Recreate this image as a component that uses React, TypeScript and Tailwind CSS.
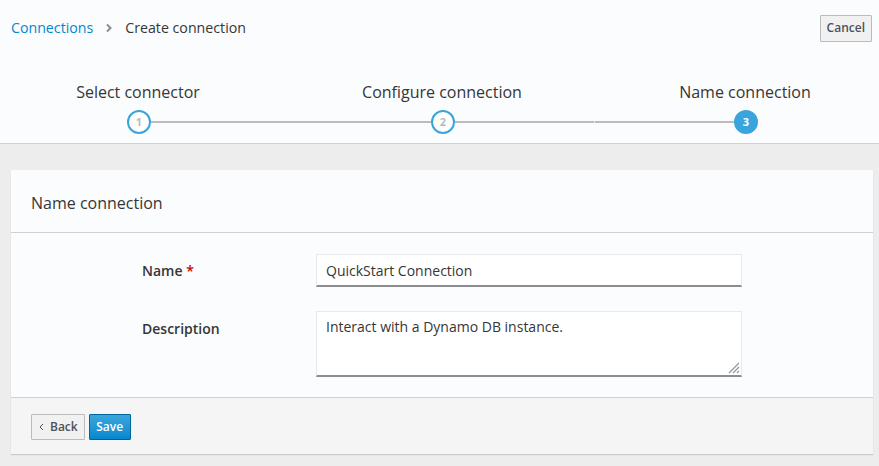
import React from "react";

const font = { fontFamily: '"Open Sans", "Noto Sans", sans-serif' };

function StepCircle({ n, active }: { n: number; active?: boolean }) {
  return (
    <div
      className={`flex h-[24px] w-[24px] shrink-0 items-center justify-center rounded-full border-2 border-[#39a5dc] text-[11px] font-bold ${
        active ? "bg-[#39a5dc] text-white" : "bg-white text-[#bbbbbb]"
      }`}
    >
      {n}
    </div>
  );
}

export default function App() {
  return (
    <div className="flex h-[466px] w-[879px] flex-col bg-[#ededed] text-[#363636]" style={font}>
      {/* Header */}
      <div className="h-[144px] shrink-0 border-b border-[#d1d1d1] bg-[#fbfcfd]">
        <div className="flex h-[56px] items-center justify-between pl-[11px] pr-[7px]">
          <div className="flex items-center text-[14.2px]">
            <span className="text-[#0088ce]">Connections</span>
            <svg className="mx-[12px]" width="8" height="10" viewBox="0 0 8 10">
              <path d="M2 1.5 L5.5 5 L2 8.5" fill="none" stroke="#8b8d8f" strokeWidth="2" />
            </svg>
            <span>Create connection</span>
          </div>
          <button className="h-[27px] rounded-[1px] border border-[#bbbbbb] bg-[#f1f1f1] px-[6px] text-[12px] font-semibold text-[#4d5258]">
            Cancel
          </button>
        </div>

        {/* Stepper labels */}
        <div className="flex pt-[24px] text-[16px] leading-[24px]">
          <div className="ml-[18px] w-[240px] text-center">Select connector</div>
          <div className="ml-[64px] w-[240px] text-center">Configure connection</div>
          <div className="ml-[63px] w-[240px] text-center">Name connection</div>
        </div>

        {/* Stepper track */}
        <div className="mt-[6px] flex items-center">
          <div className="w-[127px] shrink-0" />
          <StepCircle n={1} />
          <div className="h-[2px] w-[280px] bg-[#bbbbbb]" />
          <StepCircle n={2} />
          <div className="h-[2px] w-[139px] bg-[#bbbbbb]" />
          <div className="h-[2px] w-[1px] bg-[#e5e5e5]" />
          <div className="h-[2px] w-[139px] bg-[#bbbbbb]" />
          <StepCircle n={3} active />
        </div>
      </div>

      {/* Main */}
      <div className="flex-1 pl-[11px] pr-[6px] pt-[26px]">
        <div className="flex h-[284px] flex-col bg-white shadow-[0_1px_1px_rgba(3,3,3,0.15)]">
          <div className="flex h-[63px] shrink-0 items-center border-b border-[#d1d1d1] bg-[#fbfcfd] pl-[20px] pt-[3px] text-[16px]">
            Name connection
          </div>
          <div className="flex-1 bg-[#fbfcfd] pt-[21px] text-[14px]">
            <div className="flex items-center">
              <div className="w-[305px] shrink-0 pl-[131px] font-semibold">
                Name <span className="text-[#cc0000]">*</span>
              </div>
              <div className="flex h-[33px] w-[426px] items-center border border-[#e9e9e9] border-b-2 border-b-[#8b8d8f] bg-white px-[9px]">
                QuickStart Connection
              </div>
            </div>
            <div className="mt-[24px] flex items-start">
              <div className="w-[305px] shrink-0 pl-[131px] pt-[7px] font-semibold">Description</div>
              <div className="relative h-[66px] w-[426px] border border-[#e9e9e9] border-b-2 border-b-[#8b8d8f] bg-white px-[9px] pt-[4px]">
                Interact with a Dynamo DB instance.
                <svg className="absolute bottom-[1px] right-[1px]" width="13" height="13" viewBox="0 0 13 13">
                  <path d="M12 2 L2 12 M12 6 L6 12 M12 10 L10 12" stroke="#999" strokeWidth="1.3" />
                </svg>
              </div>
            </div>
          </div>
          <div className="flex h-[57px] shrink-0 items-center gap-[4px] border-t border-[#d1d1d1] bg-[#f5f5f5] pl-[20px] pt-[2px]">
            <button className="flex h-[26px] items-center gap-[6px] rounded-[1px] border border-[#bbbbbb] bg-[#f1f1f1] pl-[7px] pr-[6px] text-[12px] font-semibold text-[#4d5258]">
              <svg width="5" height="8" viewBox="0 0 5 8">
                <path d="M4 1 L1 4 L4 7" fill="none" stroke="#4d5258" strokeWidth="1" />
              </svg>
              Back
            </button>
            <button className="h-[26px] rounded-[1px] border border-[#00659c] bg-gradient-to-b from-[#39a5dc] to-[#0088ce] px-[6.5px] text-[12px] font-semibold text-white">
              Save
            </button>
          </div>
        </div>
      </div>
    </div>
  );
}
